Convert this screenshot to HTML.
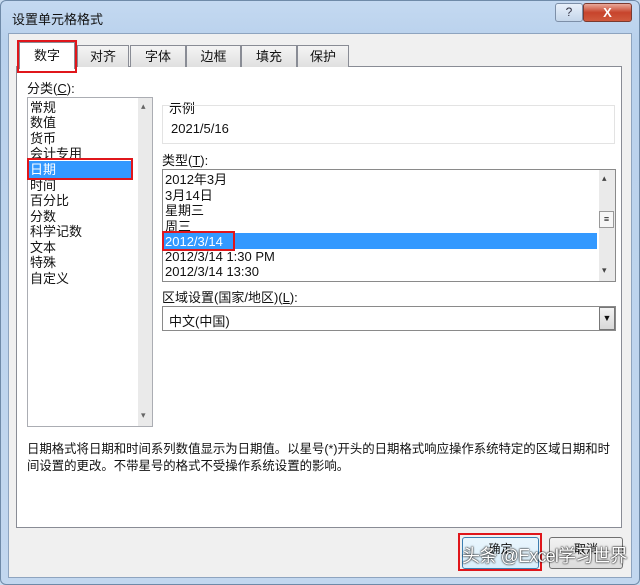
<!DOCTYPE html>
<html><head><meta charset="utf-8"><style>
*{margin:0;padding:0;box-sizing:border-box}
body{width:640px;height:585px;overflow:hidden;background:#c9dcf0;font-family:"Liberation Sans","Noto Sans CJK SC",sans-serif;font-size:13px;color:#111;position:relative}
.abs{position:absolute}
.frame{left:0;top:0;width:640px;height:585px;background:linear-gradient(#c4d9f1,#b9d1ec 40px,#c2d7ef);border:1px solid #6f8aa8;border-radius:6px}
.body{left:8px;top:33px;width:624px;height:545px;background:#f0f0f0;border:1px solid #8ea4bf}
.panel{left:16px;top:66px;width:606px;height:462px;background:#fff;border:1px solid #898c95}
.tab{top:45px;height:22px;background:linear-gradient(#f4f4f4,#e0e0e0);border:1px solid #898c95;border-bottom:none;text-align:center;line-height:21px;font-size:13px}
.box{background:#fff;border:1px solid #abadb3}
.row{position:absolute;left:2px;font-size:13px;line-height:15px}
.red{border:2px solid #e0161b}
</style></head><body>
<div class="abs frame"></div>
<div class="abs" style="left:12px;top:9px;font-size:13px">设置单元格格式</div>
<div class="abs" style="left:555px;top:3px;width:28px;height:19px;border:1px solid #7d8fa8;border-radius:3px;background:linear-gradient(#e8f0fa,#c5d6ea);text-align:center;font-size:12px;color:#334;line-height:17px">?</div>
<div class="abs" style="left:583px;top:3px;width:49px;height:19px;border:1px solid #7a3a30;border-radius:3px;background:linear-gradient(#e9a99a,#c7442c 50%,#d05a3e);text-align:center;color:#fff;font-weight:bold;line-height:17px;font-size:13px">X</div>
<div class="abs body"></div>
<div class="abs panel"></div>
<div class="abs tab" style="left:19px;top:42px;width:56px;height:27px;background:#fff;line-height:25px">数字</div>
<div class="abs tab" style="left:77px;width:52px">对齐</div>
<div class="abs tab" style="left:130px;width:56px">字体</div>
<div class="abs tab" style="left:186px;width:55px">边框</div>
<div class="abs tab" style="left:241px;width:56px">填充</div>
<div class="abs tab" style="left:297px;width:52px">保护</div>
<div class="abs red" style="left:17px;top:40px;width:60px;height:33px"></div>
<div class="abs" style="left:27px;top:78px">分类(<u>C</u>):</div>
<div class="abs box" style="left:27px;top:97px;width:126px;height:330px">
<div class="abs" style="left:110px;top:0;width:14px;height:328px;background:#eaeaea"></div>
<div class="abs" style="left:113px;top:3px;font-size:9px;color:#666">▴</div>
<div class="abs" style="left:113px;top:312px;font-size:9px;color:#666">▾</div>
<div class="abs" style="left:0;top:63px;width:103px;height:17px;background:#3399ff"></div>
<div class="row" style="top:2px">常规</div><div class="row" style="top:17px">数值</div><div class="row" style="top:33px">货币</div><div class="row" style="top:48px">会计专用</div><div class="row" style="top:64px;color:#fff">日期</div><div class="row" style="top:80px">时间</div><div class="row" style="top:95px">百分比</div><div class="row" style="top:111px">分数</div><div class="row" style="top:126px">科学记数</div><div class="row" style="top:142px">文本</div><div class="row" style="top:157px">特殊</div><div class="row" style="top:173px">自定义</div>
</div>
<div class="abs red" style="left:27px;top:158px;width:106px;height:22px"></div>
<div class="abs" style="left:169px;top:98px">示例</div>
<div class="abs" style="left:162px;top:105px;width:453px;height:39px;border:1px solid #e3e3e3"></div>
<div class="abs" style="left:171px;top:121px">2021/5/16</div>
<div class="abs" style="left:162px;top:150px">类型(<u>T</u>):</div>
<div class="abs box" style="left:162px;top:169px;width:454px;height:113px;border-color:#8a8a8a">
<div class="abs" style="left:436px;top:0;width:16px;height:111px;background:#eaeaea"></div>
<div class="abs" style="left:439px;top:3px;font-size:9px;color:#444">▴</div>
<div class="abs" style="left:436px;top:41px;width:15px;height:17px;border:1px solid #999;background:#f6f6f6;font-size:9px;text-align:center;line-height:14px">≡</div>
<div class="abs" style="left:439px;top:95px;font-size:9px;color:#444">▾</div>
<div class="abs" style="left:0;top:63px;width:434px;height:16px;background:#3399ff"></div>
<div class="row" style="top:2px">2012年3月</div><div class="row" style="top:18px">3月14日</div><div class="row" style="top:33px">星期三</div><div class="row" style="top:49px">周三</div><div class="row" style="top:64px;color:#fff">2012/3/14</div><div class="row" style="top:79px">2012/3/14 1:30 PM</div><div class="row" style="top:94px">2012/3/14 13:30</div>
</div>
<div class="abs red" style="left:162px;top:231px;width:73px;height:20px"></div>
<div class="abs" style="left:162px;top:287px">区域设置(国家/地区)(<u>L</u>):</div>
<div class="abs box" style="left:162px;top:306px;width:454px;height:25px;border-color:#8a8a8a">
<div class="abs" style="left:6px;top:4px">中文(中国)</div>
<div class="abs" style="left:436px;top:0;width:16px;height:23px;border:1px solid #777;background:linear-gradient(#f3f3f3,#d8d8d8);font-size:9px;text-align:center;line-height:21px">▼</div>
</div>
<div class="abs" style="left:27px;top:441px;line-height:17px;font-size:12.4px;white-space:nowrap">日期格式将日期和时间系列数值显示为日期值。以星号(*)开头的日期格式响应操作系统特定的区域日期和时<br>间设置的更改。不带星号的格式不受操作系统设置的影响。</div>
<div class="abs" style="left:462px;top:537px;width:77px;height:32px;border:1px solid #3c7fb1;border-radius:3px;background:linear-gradient(#eaf6fd,#d9effc);text-align:center;font-size:12px;line-height:22px">确定</div>
<div class="abs" style="left:549px;top:537px;width:74px;height:32px;border:1px solid #707070;border-radius:3px;background:linear-gradient(#f2f2f2,#dcdcdc);text-align:center;font-size:12px;line-height:22px">取消</div>
<div class="abs red" style="left:458px;top:533px;width:84px;height:38px"></div>
<div class="abs" style="left:462px;top:542px;font-size:18px;white-space:nowrap;color:#fff;text-shadow:0 0 2px #000,0 0 1px #000;letter-spacing:-0.8px">头条 @Excel学习世界</div>
</body></html>
